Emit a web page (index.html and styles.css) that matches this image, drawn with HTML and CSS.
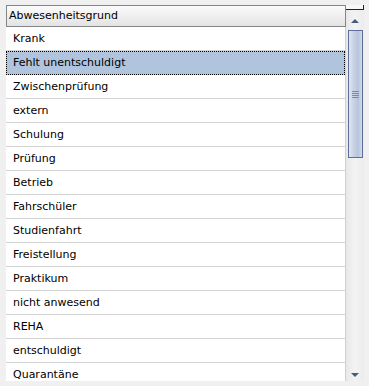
FILE: index.html
```html
<!DOCTYPE html>
<html lang="de">
<head>
    <meta charset="UTF-8">
    <title>Abwesenheitsgrund</title>
    <link rel="stylesheet" href="styles.css">
</head>
<body>
<div class="grid-wrap">
    <div class="grid-main">
        <div class="grid-header">Abwesenheitsgrund</div>
        <div class="grid-body">
            <div class="row">Krank</div>
            <div class="row selected">Fehlt unentschuldigt</div>
            <div class="row">Zwischenprüfung</div>
            <div class="row">extern</div>
            <div class="row">Schulung</div>
            <div class="row">Prüfung</div>
            <div class="row">Betrieb</div>
            <div class="row">Fahrschüler</div>
            <div class="row">Studienfahrt</div>
            <div class="row">Freistellung</div>
            <div class="row">Praktikum</div>
            <div class="row">nicht anwesend</div>
            <div class="row">REHA</div>
            <div class="row">entschuldigt</div>
            <div class="row">Quarantäne</div>
        </div>
    </div>
    <div class="scroll-col">
        <div class="scroll-corner"></div>
        <div class="scrollbar">
            <div class="arrow-up"></div>
            <div class="track">
                <div class="thumb">
                    <div class="grip"></div>
                </div>
            </div>
            <div class="arrow-down"></div>
        </div>
    </div>
</div>
</body>
</html>
```

FILE: styles.css
```css
body {
    margin: 0;
    background: #f0f0f0;
    font-family: "DejaVu Sans", "Liberation Sans", sans-serif;
    font-size: 11px;
    color: #000;
    overflow: hidden;
}

.grid-wrap {
    display: flex;
    padding: 5px 0 0 6px;
    height: 376px;
}

.grid-main {
    width: 340px;
    display: flex;
    flex-direction: column;
}

.grid-header {
    height: 20px;
    line-height: 20px;
    padding-left: 2px;
    border: 1px solid #858585;
    background: linear-gradient(#fbfbfb, #e3e3e3);
}

.grid-body {
    flex: 1;
    overflow: hidden;
    background: #fff;
    border-right: 1px solid #d0d0d0;
}

.row {
    height: 23px;
    line-height: 23px;
    padding-left: 7px;
    border-bottom: 1px solid #d5d5d5;
    white-space: nowrap;
}

.row.selected {
    background: #b0c4de;
    border: 1px dotted #000;
    line-height: 22px;
    height: 22px;
    padding-left: 6px;
}

.scroll-col {
    width: 20px;
    display: flex;
    flex-direction: column;
}

.scroll-corner {
    height: 4px;
    margin-right: 2px;
    border-bottom: 1px solid #222;
    border-right: 1px solid #222;
    background: #f7f7f7;
}

.scrollbar {
    flex: 1;
    width: 18px;
    display: flex;
    flex-direction: column;
    align-items: center;
    background: linear-gradient(90deg, #e8e8e8, #f3f3f3, #ececec);
}

.arrow-up, .arrow-down {
    width: 0;
    height: 0;
    border-left: 4px solid transparent;
    border-right: 4px solid transparent;
}

.arrow-up {
    border-bottom: 4px solid #4a5a80;
    margin: 9px 0 7px;
}

.arrow-down {
    border-top: 4px solid #4a5a80;
    margin: 0 0 4px;
}

.track {
    flex: 1;
    width: 100%;
    display: flex;
    justify-content: center;
}

.thumb {
    width: 13px;
    height: 126px;
    border: 1px solid #5d6e9c;
    background: linear-gradient(90deg, #dfe6f1, #c4d0e4 40%, #b7c5dc 70%, #d2dbea);
    display: flex;
    justify-content: center;
    align-items: center;
}

.grip {
    width: 7px;
    height: 7px;
    background: repeating-linear-gradient(#8a8a8a 0 1px, transparent 1px 2px);
}
```
